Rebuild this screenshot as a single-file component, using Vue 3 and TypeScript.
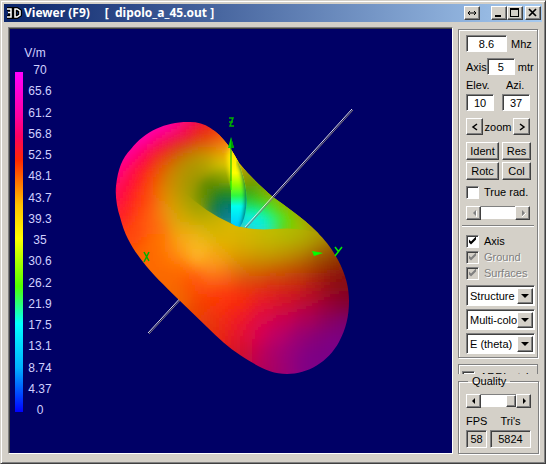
<script setup lang="ts">
import { ref } from 'vue'

type Sample = [number, number, string]

const frequency = ref('8.6')
const axisLength = ref('5')
const elevation = ref('10')
const azimuth = ref('37')
const trueRadius = ref(false)
const showAxis = ref(true)
const quality = ref(100)

const scale = ['70', '65.6', '61.2', '56.8', '52.5', '48.1', '43.7', '39.3', '35', '30.6', '26.2', '21.9', '17.5', '13.1', '8.74', '4.37', '0']

const selects = [
  { label: 'Display', options: ['Structure', 'Pattern'] },
  { label: 'Colouring', options: ['Multi-color', 'Single'] },
  { label: 'Field', options: ['E (theta)', 'E (phi)'] },
]

// Field strength colours at known points of the outer surface
const outer: Sample[] = [
  [187, 121, '#ff00a0'], [165, 127, '#ff00c0'], [145, 136, '#ff00c0'], [130, 150, '#ff00b0'], [119, 170, '#ff0090'],
  [116, 195, '#ff0060'], [120, 217, '#ff2028'], [130, 240, '#ff4808'], [200, 122, '#f00848'], [212, 129, '#ee1c10'],
  [223, 139, '#ff5010'], [230, 148, '#ffa010'], [236, 158, '#e8b800'],
  [180, 133, '#f80060'], [160, 143, '#fc0050'], [143, 158, '#ff0040'], [133, 178, '#ff1030'], [133, 200, '#ff2818'],
  [140, 222, '#ff4808'], [195, 133, '#ec1c10'], [207, 138, '#e64000'], [216, 145, '#e08008'],
  [178, 148, '#dc4000'], [162, 160, '#e85000'], [152, 178, '#f84c00'], [149, 200, '#ff5008'], [153, 220, '#ff6810'],
  [200, 148, '#c49000'], [184, 160, '#b89400'], [172, 176, '#c88c00'], [167, 195, '#e08c00'], [168, 213, '#f09810'],
  [220, 157, '#dcc800'], [206, 163, '#b0a000'], [193, 173, '#a89800'], [184, 190, '#b09c00'], [181, 207, '#c4a800'],
  [185, 222, '#d8ac00'], [228, 168, '#f4f000'], [216, 173, '#a0a000'], [200, 187, '#889400'], [196, 202, '#90a000'],
  [203, 215, '#b0a800'], [212, 227, '#d0b400'], [230, 236, '#dcb800'], [250, 238, '#d0b800'], [270, 238, '#c0bc00'],
  [290, 234, '#b0bc00'], [307, 234, '#b0b000'], [320, 238, '#ac9400'],
  [200, 236, '#e8b810'], [183, 237, '#f8a818'], [195, 250, '#ffc030'], [208, 261, '#ffa820'], [218, 268, '#fc9820'],
  [178, 252, '#ff9010'], [160, 240, '#ff7000'], [145, 256, '#fc6800'], [162, 262, '#ff6c00'], [180, 270, '#ff6800'],
  [165, 283, '#f86800'], [180, 298, '#f06800'], [195, 286, '#ff4c04'], [208, 278, '#ff6018'], [225, 280, '#f85018'],
  [222, 252, '#e8a800'], [240, 253, '#d8a400'], [240, 268, '#d87808'], [260, 255, '#c8a000'], [280, 254, '#c09c00'],
  [300, 252, '#b89400'], [320, 253, '#a06c00'], [334, 257, '#904400'], [260, 270, '#cc6c00'], [282, 270, '#c45c00'],
  [303, 267, '#b44c00'], [322, 267, '#9c3000'], [338, 272, '#8c1804'],
  [250, 283, '#e43c08'], [272, 284, '#dc2c10'], [295, 283, '#cc2810'], [317, 283, '#b01c10'], [334, 286, '#940818'],
  [345, 285, '#800814'], [220, 298, '#ff3400'], [205, 303, '#f83c04'], [195, 314, '#e84804'], [240, 300, '#fa2c08'],
  [262, 301, '#e81c28'], [285, 301, '#d41428'], [308, 301, '#bc0830'], [328, 302, '#9c0034'], [345, 303, '#800038'],
  [220, 318, '#f42c14'], [240, 319, '#ee1c28'], [262, 318, '#dc0848'], [285, 319, '#c80050'], [307, 319, '#ac0058'],
  [328, 321, '#8c0060'], [345, 325, '#780074'], [207, 327, '#e03808'], [223, 337, '#e82414'], [240, 338, '#e41034'],
  [258, 336, '#d80050'], [278, 337, '#bc0068'], [300, 337, '#980074'], [318, 340, '#840078'], [336, 341, '#7c0088'],
  [240, 354, '#cc1428'], [257, 358, '#c40050'], [273, 354, '#a8006c'], [290, 354, '#94007c'], [309, 357, '#800084'],
  [325, 356, '#780088'], [270, 370, '#a80060'], [289, 372, '#980078'], [309, 369, '#7c0088'],
]

// Additional colours inside the central funnel
const funnel: Sample[] = [
  [204, 198, '#688c00'], [209, 188, '#4c8400'], [217, 182, '#688c00'], [225, 178, '#809c00'], [212, 200, '#308420'],
  [219, 193, '#208420'], [228, 192, '#309010'], [214, 210, '#207c30'], [218, 205, '#007858'], [226, 203, '#007c60'],
  [220, 213, '#007484'], [228, 213, '#007890'], [228, 221, '#008ca8'], [222, 218, '#007c90'],
  [244, 174, '#989400'], [250, 182, '#7c9c00'], [250, 193, '#38a818'], [261, 190, '#7ca400'], [259, 199, '#44cc08'],
  [251, 204, '#20d850'], [267, 206, '#40e020'], [262, 211, '#18f078'], [251, 214, '#00f8d0'], [260, 219, '#00f8f0'],
  [247, 224, '#00e0ff'], [255, 228, '#00e0ff'], [263, 227, '#00e8ff'], [268, 222, '#10f8b0'], [274, 217, '#30f058'], [275, 228, '#20e8a0'],
  [282, 224, '#40e818'], [278, 208, '#64d800'], [290, 219, '#70d800'], [287, 230, '#70cc08'], [298, 228, '#90c800'],
  [270, 195, '#98a800'], [284, 204, '#a0a800'], [299, 216, '#a4a400'], [312, 227, '#a89800'],
]

const cellSize = 3

function channels(hex: string): number[] {
  return [1, 3, 5].map(i => parseInt(hex.slice(i, i + 2), 16))
}

// Weighted mean of nearby samples on a regular grid; each sample has its own spread
function shade(samples: (Sample | [number, number, string, number])[], x0: number, y0: number, x1: number, y1: number) {
  const points = samples.map(([x, y, hex, spread = 10]) => ({ x, y, rgb: channels(hex), spread }))
  const cells: { x: number; y: number; fill: string }[] = []
  for (let y = y0; y < y1; y += cellSize) {
    for (let x = x0; x < x1; x += cellSize) {
      let total = 0
      const sum = [0, 0, 0]
      for (const p of points) {
        const dx = p.x - x - cellSize / 2
        const dy = p.y - y - cellSize / 2
        const w = Math.exp(-(dx * dx + dy * dy) / (2 * p.spread * p.spread)) * 100 / (p.spread * p.spread) + 1e-9
        total += w
        for (let c = 0; c < 3; c++) sum[c] += w * p.rgb[c]
      }
      cells.push({ x, y, fill: `rgb(${sum.map(v => Math.round(v / total)).join(',')})` })
    }
  }
  return cells
}

const inner = [...outer, ...funnel.map(([x, y, hex]): [number, number, string, number] => [x, y, hex, 6])]
const outerCells = shade(outer, 105, 111, 360, 384)
const innerCells = shade(inner, 177, 129, 345, 249)
</script>

<template>
  <main class="window">
    <header class="title-bar">
      <svg class="app-icon" viewBox="0 0 16 14" aria-hidden="true">
        <path d="M1 3h4v8H1M2 7h3M9 3v8h2l3-2V5l-3-2z" fill="none" stroke="#000" stroke-width="4" />
        <path d="M1 3h4v3.500H2h3V11H1M9 3v8h2l3-2V5l-3-2z" fill="none" stroke="#fff" stroke-width="1.500" />
      </svg>
      <h1 class="title">Viewer (F9)<span class="file">[&nbsp; dipolo_a_45.out ]</span></h1>
      <button class="bevel caption swap" aria-label="Swap">
        <svg viewBox="0 0 14 12"><path d="M3 6h8M5 4L3 6l2 2M9 4l2 2-2 2" fill="none" stroke="#000" /></svg>
      </button>
      <button class="bevel caption" aria-label="Minimize">
        <svg viewBox="0 0 14 12"><path d="M3 8h6v2H3z" /></svg>
      </button>
      <button class="bevel caption" aria-label="Maximize">
        <svg viewBox="0 0 14 12"><path d="M2 1h9v9H2zM3 3v6h7V3z" fill-rule="evenodd" /></svg>
      </button>
      <button class="bevel caption close" aria-label="Close">
        <svg viewBox="0 0 14 12"><path d="M3 2l7 7M10 2l-7 7" fill="none" stroke="#000" stroke-width="1.700" /></svg>
      </button>
    </header>

    <div class="body">
      <section class="viewer">
        <svg class="scene" viewBox="9 28 443 425">
          <defs>
            <linearGradient id="scale" x1="0" y1="0" x2="0" y2="1">
              <stop offset="0" stop-color="#ff00ff" />
              <stop offset=".13" stop-color="#ff00a0" />
              <stop offset=".19" stop-color="#ff0060" />
              <stop offset=".26" stop-color="#ff2800" />
              <stop offset=".39" stop-color="#ffc000" />
              <stop offset=".49" stop-color="#ffff00" />
              <stop offset=".63" stop-color="#50ff00" />
              <stop offset=".74" stop-color="#00ffff" />
              <stop offset=".87" stop-color="#00b0ff" />
              <stop offset="1" stop-color="#0000ff" />
            </linearGradient>
            <linearGradient id="blade" gradientUnits="userSpaceOnUse" x1="0" y1="140" x2="0" y2="227">
              <stop offset="0" stop-color="#ffb020" />
              <stop offset=".18" stop-color="#ffe800" />
              <stop offset=".38" stop-color="#ffff00" />
              <stop offset=".52" stop-color="#90ff00" />
              <stop offset=".64" stop-color="#30f840" />
              <stop offset=".76" stop-color="#00fff0" />
              <stop offset="1" stop-color="#00c8ff" />
            </linearGradient>
            <clipPath id="body">
              <path d="M187 122C204 121 216 129 228 145C233 152 237 159 239 163C249 175 260 186 273 197C284 205 302 217 317 232C326 241 332 249 338 260C346 275 349 288 349 301C349 316 346 329 339 342C328 362 308 374 287 374C270 374 257 366 240 355C229 348 218 338 207 327L178 299C164 285 153 275 143 262C133 249 125 237 120 217C117 208 115 196 116 186C118 169 122 158 131 149C145 131 166 122 187 122Z" />
            </clipPath>
            <clipPath id="funnel">
              <path d="M182 130V190Q205 212 232 224Q250 231 275 229Q306 226 328 238L340 210L236 130Z" />
            </clipPath>
            <clipPath id="bladeShape">
              <path d="M226 142C241 160 249 188 246 208Q245 219 240 227Q235 226 231 223V190L222 160Z" />
            </clipPath>
            <filter id="smooth" x="-5%" y="-5%" width="110%" height="110%"><feGaussianBlur stdDeviation="2" /></filter>
            <filter id="edge" x="-50%" y="-20%" width="200%" height="140%"><feGaussianBlur stdDeviation="2" /></filter>
          </defs>

          <text class="reading" x="35" y="57">V/m</text>
          <rect x="15" y="72" width="8" height="340" fill="url(#scale)" />
          <text v-for="(value, i) in scale" :key="value" class="reading" x="40" :y="74 + Math.round(i * 21.25)">{{ value }}</text>

          <path class="wire dark" d="M149 334L185 295" />
          <path class="wire" d="M148 333L184 294" />

          <g clip-path="url(#body)">
            <g filter="url(#smooth)" shape-rendering="crispEdges">
              <rect v-for="(c, i) in outerCells" :key="i" :x="c.x" :y="c.y" :width="cellSize" :height="cellSize" :fill="c.fill" />
            </g>
            <g clip-path="url(#funnel)">
              <g filter="url(#smooth)" shape-rendering="crispEdges">
                <rect v-for="(c, i) in innerCells" :key="i" :x="c.x" :y="c.y" :width="cellSize" :height="cellSize" :fill="c.fill" />
              </g>
            </g>
            <g clip-path="url(#bladeShape)">
              <path d="M227 156L230 144H250V230H231V180Z" fill="url(#blade)" filter="url(#edge)" />
              <path d="M231 184V226H250V150H231Z" fill="url(#blade)" />
              <path d="M240 160C249 184 250 206 243 228" fill="none" stroke="#00584c" stroke-opacity=".9" stroke-width="5" filter="url(#edge)" />
            </g>
          </g>

          <path class="wire dark" d="M246 228L353 110" />
          <path class="wire" d="M245 227L352 109" />

          <path d="M231 147V181" stroke="#00b800" />
          <path d="M231 181V190" stroke="#00f000" />
          <path d="M231 137L234 148H228Z" fill="#00d800" />
          <path d="M231 137V148H234Z" fill="#00a000" />
          <path d="M312 251L323 253L314 256Z" fill="#00ff00" />
          <path d="M229 118H233L230 126H234M229 122H233" class="letter" />
          <path d="M144 252L149 261M149 252L144 262" class="letter" />
          <path d="M335 247L338 251M342 247L335 256" class="letter bright" />
        </svg>
      </section>

      <aside class="side">
        <section class="group controls">
          <label class="row tight"><input v-model="frequency" class="field wide"> Mhz</label>
          <label class="row axis">Axis<input v-model="axisLength" class="field"><span class="unit">mtr</span></label>
          <div class="angles">
            <label>Elev.<input v-model="elevation" class="field"></label>
            <label><span class="azi">Azi.</span><input v-model="azimuth" class="field"></label>
          </div>
          <div class="row zoom">
            <button class="bevel step" aria-label="Zoom out"><svg viewBox="0 0 14 14"><path d="M9 4L5 7L9 10" fill="none" stroke="#000" stroke-width="1.500" /></svg></button>
            <span>zoom</span>
            <button class="bevel step" aria-label="Zoom in"><svg viewBox="0 0 14 14"><path d="M5 4L9 7L5 10" fill="none" stroke="#000" stroke-width="1.500" /></svg></button>
          </div>
          <div class="buttons">
            <button class="bevel">Ident</button><button class="bevel">Res</button>
            <button class="bevel">Rotc</button><button class="bevel">Col</button>
          </div>
          <label class="check"><input v-model="trueRadius" type="checkbox">True rad.</label>
          <div class="scroll">
            <button class="bevel" disabled aria-label="Smaller radius"><svg viewBox="0 0 12 12"><path d="M8 3v6L5 6z" fill="#808080" /><path d="M8.500 4v6" stroke="#fff" /></svg></button>
            <input type="range" disabled aria-label="Radius">
            <button class="bevel" disabled aria-label="Larger radius"><svg viewBox="0 0 12 12"><path d="M5 3v6l3-3z" fill="#808080" /><path d="M5 10l4-4" stroke="#fff" /></svg></button>
          </div>
          <hr>
          <div class="checks">
            <label class="check"><input v-model="showAxis" type="checkbox">Axis</label>
            <label class="check off"><input type="checkbox" checked disabled>Ground</label>
            <label class="check off"><input type="checkbox" checked disabled>Surfaces</label>
          </div>
          <div class="selects">
            <div v-for="s in selects" :key="s.label" class="select">
              <select :aria-label="s.label"><option v-for="o in s.options" :key="o">{{ o }}</option></select>
              <span class="bevel arrow" aria-hidden="true"><svg viewBox="0 0 12 14"><path d="M2 5h8L6 9z" /></svg></span>
            </div>
          </div>
        </section>

        <section class="group style">
          <label class="check"><input type="checkbox">ARRL style</label>
        </section>

        <fieldset class="group quality">
          <legend>Quality</legend>
          <div class="scroll">
            <button class="bevel" aria-label="Lower quality"><svg viewBox="0 0 12 12"><path d="M7 3v6L4 6z" /></svg></button>
            <input v-model="quality" type="range" aria-label="Quality">
            <button class="bevel" aria-label="Higher quality"><svg viewBox="0 0 12 12"><path d="M5 3v6l3-3z" /></svg></button>
          </div>
          <div class="stats">
            <span>FPS</span><span>Tri's</span>
            <output>58</output><output>5824</output>
          </div>
        </fieldset>
      </aside>
    </div>
  </main>
</template>

<style>
body {
  background: #d4d0c8;
}
</style>

<style scoped>
* {
  box-sizing: border-box;
}
.window {
  min-height: 100vh;
  display: flex;
  flex-direction: column;
  padding: 3px 3px 7px;
  background: #d4d0c8;
  border: 1px solid #d4d0c8;
  border-right-color: #404040;
  border-bottom-color: #404040;
  box-shadow: inset 1px 1px #fff, inset -1px -1px #808080;
  font: 11px/14px "Liberation Sans", Arial, sans-serif;
  color: #000;
}
button, input, select {
  font: inherit;
  color: inherit;
  margin: 0;
  padding: 0;
  border-radius: 0;
}
svg {
  display: block;
}
.title-bar {
  display: flex;
  align-items: center;
  height: 18px;
  padding: 0 1px 0 2px;
  background: linear-gradient(90deg, #0a246a, #a6caf0);
}
.app-icon {
  width: 16px;
  height: 14px;
}
.title {
  flex: 1;
  margin: 0 0 0 2px;
  font: bold 12px/18px "Noto Sans", Tahoma, sans-serif;
  color: #fff;
  white-space: nowrap;
}
.file {
  margin-left: 15px;
}
.bevel {
  display: flex;
  align-items: center;
  justify-content: center;
  background: #d4d0c8;
  border: 1px solid;
  border-color: #fff #404040 #404040 #fff;
  box-shadow: inset -1px -1px #808080;
}
.caption {
  width: 16px;
  height: 14px;
}
.caption svg {
  width: 14px;
  height: 12px;
}
.swap {
  margin-right: 11px;
}
.close {
  margin-left: 2px;
}
.body {
  flex: 1;
  display: flex;
  gap: 5px;
  padding: 5px 4px 0 4px;
}
.viewer {
  flex: 1;
  display: flex;
  min-width: 0;
  margin-bottom: 2px;
  background: #000066;
  border: 1px solid;
  border-color: #808080 #fff #fff #808080;
  box-shadow: inset 1px 1px #404040;
}
.scene {
  flex: 1;
  min-width: 0;
}
.reading {
  fill: #d0d0ff;
  font-size: 12px;
  text-anchor: middle;
}
.wire {
  fill: none;
  stroke: #e0e0e0;
  stroke-width: 1;
}
.wire.dark {
  stroke: #807878;
}
.letter {
  fill: none;
  stroke: #00b000;
  stroke-width: 1.5;
}
.bright {
  stroke: #00f000;
}
.side {
  flex: none;
  width: 80px;
  padding-top: 2px;
  white-space: nowrap;
}
.group {
  margin: 0;
  border: 1px solid #808080;
  box-shadow: 1px 1px #fff, inset 1px 1px #fff;
}
.controls {
  padding: 5px 7px 3px 7px;
}
.row {
  display: flex;
  align-items: center;
}
.tight {
  gap: 4px;
}
.field {
  width: 28px;
  height: 17px;
  text-align: center;
  background: #fff;
  border: 1px solid;
  border-color: #808080 #fff #fff #808080;
  box-shadow: inset 1px 1px #404040;
}
.wide {
  width: 41px;
}
.axis {
  margin-top: 6px;
}
.unit {
  margin-left: 3px;
}
.angles {
  display: flex;
  justify-content: space-between;
  margin-top: 3px;
}
.angles label {
  display: grid;
  gap: 2px;
}
.azi {
  padding-left: 4px;
}
.zoom {
  justify-content: space-between;
  margin-top: 7px;
}
.step {
  width: 17px;
  height: 17px;
}
.step svg {
  width: 14px;
  height: 14px;
}
.buttons {
  display: grid;
  grid-template-columns: 33px 29px;
  grid-auto-rows: 18px;
  gap: 2px 3px;
  margin-top: 7px;
}
.check {
  display: flex;
  align-items: center;
  gap: 5px;
}
.check input {
  appearance: none;
  flex: none;
  width: 13px;
  height: 13px;
  background: #fff;
  border: 1px solid;
  border-color: #808080 #fff #fff #808080;
  box-shadow: inset 1px 1px #404040;
}
.check input:checked::before {
  content: "";
  display: block;
  width: 9px;
  height: 9px;
  margin: 1px;
  background: #000;
  clip-path: polygon(1px 3px, 3px 5px, 8px 0, 8px 3px, 3px 8px, 1px 6px);
}
.off {
  color: #808080;
  text-shadow: 1px 1px #fff;
}
.check.off input {
  background: #d4d0c8;
}
.check.off input:checked::before {
  background: #808080;
}
.buttons + .check {
  margin-top: 5px;
}
.scroll {
  display: grid;
  grid-template-columns: 15px 1fr 15px;
  height: 13px;
  margin-top: 7px;
}
.scroll svg {
  width: 12px;
  height: 12px;
}
.scroll input {
  appearance: none;
  width: 100%;
  min-width: 0;
  height: 13px;
  background: #fff;
  border-top: 1px solid #808080;
}
.scroll input::-webkit-slider-thumb {
  appearance: none;
  width: 10px;
  height: 12px;
  background: #d4d0c8;
  border: 1px solid;
  border-color: #fff #404040 #404040 #fff;
  box-shadow: inset -1px -1px #808080;
}
.scroll input:disabled::-webkit-slider-thumb {
  visibility: hidden;
}
hr {
  margin: 6px -4px 0;
  border: 0;
  border-top: 1px solid #808080;
  border-bottom: 1px solid #fff;
}
.checks {
  display: grid;
  grid-auto-rows: 16px;
  margin-top: 6px;
}
.selects {
  display: grid;
  gap: 3px;
  margin: 4px -5px 0 0;
}
.select {
  display: grid;
  grid-template-columns: 1fr 16px;
  height: 21px;
  padding: 2px 1px 2px 2px;
  background: #fff;
  border: 1px solid;
  border-color: #808080 #fff #fff #808080;
  box-shadow: inset 1px 1px #404040;
}
.select select {
  appearance: none;
  grid-area: 1 / 1 / 2 / 3;
  width: 100%;
  min-width: 0;
  padding: 0 14px 0 1px;
  background: none;
  border: 0;
}
.arrow {
  grid-area: 1 / 2;
  pointer-events: none;
}
.arrow svg {
  width: 12px;
  height: 14px;
}
.style {
  height: 10px;
  margin-top: 6px;
  padding: 5px 3px 0;
  overflow: hidden;
  border-bottom: 0;
  box-shadow: inset 1px 1px #fff;
}
.quality {
  padding: 0 7px 5px;
}
.quality legend {
  margin-left: 2px;
  padding: 0 4px;
}
.quality .scroll {
  margin-top: 6px;
}
.stats {
  display: grid;
  grid-template-columns: 21px 41px;
  gap: 2px 3px;
  margin-top: 7px;
  text-align: center;
}
.stats output {
  height: 18px;
  line-height: 16px;
  border: 1px solid;
  border-color: #808080 #fff #fff #808080;
  box-shadow: inset 1px 1px #404040;
}
</style>
